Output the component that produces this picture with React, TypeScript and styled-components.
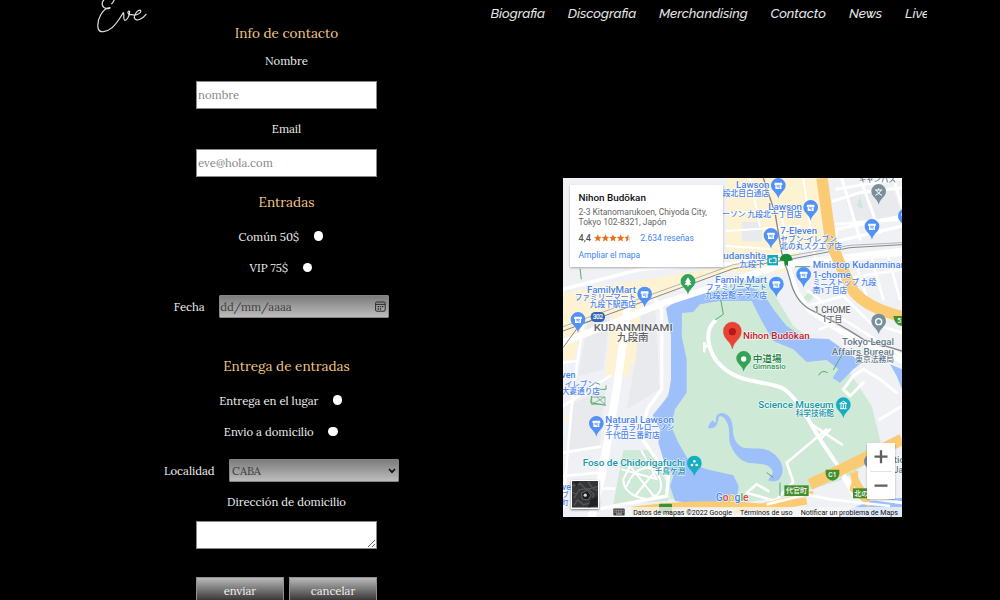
import React from "react";
import styled, { createGlobalStyle } from "styled-components";

const Global = createGlobalStyle`
  * { box-sizing: border-box; }
  body { margin: 0; background: #000; overflow: hidden; }
`;

const serif = `Lora, "Liberation Serif", serif`;

const Page = styled.div`
  width: 1000px;
  height: 600px;
  overflow: hidden;
  background: #000;
  color: #f1f1f1;
  font-family: ${serif};
`;

const Header = styled.header`
  display: flex;
  justify-content: space-between;
  align-items: flex-start;
  height: 22px;
  padding: 0 73px 0 96px;
`;

const Logo = styled.svg`
  width: 51.7px;
  height: 33px;
  fill: none;
  stroke: #dedede;
  stroke-width: 3.6;
  stroke-linecap: round;
  stroke-linejoin: round;
`;

const Nav = styled.nav`
  display: flex;
  gap: 22px;
  width: 436.5px;
  height: 27px;
  overflow: hidden;
`;

const NavLink = styled.a<{ $w: number }>`
  flex: 0 0 ${(p) => p.$w}px;
  min-width: 0;
  white-space: nowrap;
  font: italic 500 13.3px/27px Raleway, Lato, sans-serif;
  color: #e6e6e6;
`;

const Main = styled.main`
  display: flex;
  gap: 126.5px;
  padding-left: 136.5px;
`;

const Form = styled.form`
  display: flex;
  flex-direction: column;
  align-items: center;
  width: 300px;
`;

const Heading = styled.h2<{ $mt?: number }>`
  margin: ${(p) => p.$mt ?? 0}px 0 0;
  font: 400 13.55px/22px ${serif};
  color: #f3c887;
  white-space: nowrap;
`;

const Label = styled.label<{ $mt?: number }>`
  margin-top: ${(p) => p.$mt ?? 0}px;
  font: 400 11.33px/20px ${serif};
  white-space: nowrap;
`;

const Row = styled.div<{ $mt: number; $h?: number; $right: number }>`
  display: flex;
  align-items: center;
  gap: 14.5px;
  height: ${(p) => p.$h ?? 20}px;
  margin-top: ${(p) => p.$mt}px;
  padding-right: ${(p) => p.$right}px;
`;

const Radio = styled.input`
  appearance: none;
  width: 9.4px;
  height: 9.4px;
  margin: 0 0 1px;
  border-radius: 50%;
  background: #fff;
`;

const Field = styled.input<{ $mt: number }>`
  width: 181px;
  height: 28px;
  margin-top: ${(p) => p.$mt}px;
  padding: 0 1px;
  border: 1px solid #8a8a8a;
  background: #fff;
  font: 400 11.33px ${serif};
  &::placeholder { color: #858585; }
`;

const Area = styled.textarea`
  width: 181px;
  height: 28px;
  margin: 9.5px 0 0;
  border: 1px solid #8a8a8a;
  background: #fff;
  resize: both;
`;

const Picker = styled.div<{ $pad: number }>`
  display: flex;
  align-items: center;
  justify-content: space-between;
  width: 170px;
  height: 23px;
  padding: 0 2px 0 ${(p) => p.$pad}px;
  border: 1px solid #858585;
  border-radius: 1px;
  background: linear-gradient(#7c7c7c, #bdbdbd);
  color: #3c3c3c;
  font: 400 11.33px ${serif};
`;

const Buttons = styled.div`
  display: flex;
  gap: 5px;
  margin-top: 28px;
`;

const Button = styled.button`
  width: 88px;
  height: 28px;
  padding: 0;
  border: 1px solid #909090;
  background: linear-gradient(#b9b9b9, #222);
  color: #f1f1f1;
  font: 400 11.33px ${serif};
`;

const MapFrame = styled.section`
  position: relative;
  width: 339px;
  height: 339px;
  margin-top: 156px;
  overflow: hidden;
  font-family: Roboto, "Noto Sans CJK JP", sans-serif;
`;

const MapCanvas = styled.svg`
  display: block;
  width: 339px;
  height: 339px;
  text {
    font-family: Roboto, "Noto Sans CJK JP", sans-serif;
    font-weight: 500;
    paint-order: stroke;
    stroke: rgba(255, 255, 255, 0.75);
    stroke-width: 4px;
    stroke-linejoin: round;
  }
`;

const ShieldText = styled.g`
  fill: #fff;
  text {
    stroke: none;
  }
`;

const Card = styled.div`
  position: absolute;
  left: 7px;
  top: 7px;
  width: 153px;
  height: 82px;
  padding: 6px 0 0 8.5px;
  background: #fff;
  box-shadow: 0 1px 2px rgba(0, 0, 0, 0.3);
  white-space: nowrap;
`;

const PlaceName = styled.div`
  font-size: 9.9px;
  line-height: 13px;
  font-weight: 500;
  color: #111;
`;

const Address = styled.div`
  margin-top: 4px;
  font-size: 8.5px;
  line-height: 9.8px;
  color: #666;
`;

const Rating = styled.div`
  display: flex;
  align-items: center;
  height: 12px;
  margin-top: 4px;
  font-size: 9.2px;
  font-weight: 500;
  color: #555;
`;

const Stars = styled.svg`
  width: 38px;
  height: 8px;
  margin: 0 8.5px 0 3px;
`;

const MapLink = styled.a`
  font-size: 8.5px;
  font-weight: 400;
  color: #4285f4;
`;

const MoreLink = styled(MapLink)`
  display: block;
  margin-top: 6.5px;
  line-height: 11px;
`;

const Zoom = styled.div`
  position: absolute;
  left: 303.5px;
  top: 265px;
  width: 28px;
  height: 56px;
  background: #fff;
  box-shadow: 0 1px 2px rgba(0, 0, 0, 0.3);
`;

const Satellite = styled.svg`
  position: absolute;
  left: 7.5px;
  top: 302px;
  width: 28.5px;
  height: 28.5px;
  border: 1px solid #fff;
  box-shadow: 0 1px 2px rgba(0, 0, 0, 0.5);
`;

const Legal = styled.div`
  position: absolute;
  left: 49px;
  right: 0;
  bottom: 0;
  display: flex;
  align-items: center;
  justify-content: space-between;
  height: 10px;
  padding: 0 4px 0 1px;
  background: rgba(245, 245, 245, 0.75);
  font-size: 7.1px;
  color: #111;
  white-space: nowrap;
`;

const links: [string, number][] = [
  ["Biografia", 55.2],
  ["Discografia", 69.3],
  ["Merchandising", 89.5],
  ["Contacto", 56.5],
  ["News", 34],
  ["Live", 30],
];

const BLUE = "#4a83ea";
const TEAL = "#1396a8";
const SLATE = "#64798a";

type T = [string, number, number, number, number, string, ("start" | "end")?];

// text, x, baseline, size, drawn length, colour, anchor
const labels: T[] = [
  ["Lawson", 628, 36, 29, 100, BLUE, "end"],
  ["段北目白通店", 628, 59, 24, 140, BLUE, "end"],
  ["Lawson", 726, 101, 29, 101, BLUE, "end"],
  ["ーソン 九段北一丁目店", 725, 124, 23, 238, BLUE, "end"],
  ["7-Eleven", 661, 175, 28, 110, BLUE],
  ["セブン-イレブン", 661, 197, 23, 170, BLUE],
  ["北の丸スクエア店", 661, 219, 24, 185, BLUE],
  ["udanshita", 618, 249, 29, 128, BLUE, "end"],
  ["九段下", 614, 273, 25, 76, BLUE, "end"],
  ["Ministop Kudanminami", 758, 276, 28, 296, BLUE],
  ["1-chome", 758, 305, 28, 114, BLUE],
  ["ミニストップ 九段", 758, 328, 23, 191, BLUE],
  ["南1丁目店", 758, 351, 23, 103, BLUE],
  ["Family Mart", 621, 321, 29, 155, BLUE, "end"],
  ["ファミリーマート", 621, 343, 23, 183, BLUE, "end"],
  ["九段会館テラス店", 621, 365, 23, 186, BLUE, "end"],
  ["FamilyMart", 228, 350, 29, 147, BLUE, "end"],
  ["ファミリーマート", 228, 371, 23, 184, BLUE, "end"],
  ["九段下駅西店", 228, 394, 23, 139, BLUE, "end"],
  ["KUDANMINAMI", 101, 465, 28, 237, "#5f6368"],
  ["九段南", 171, 494, 31, 95, "#5f6368"],
  ["1 CHOME", 763, 412, 25, 108, "#5f6368"],
  ["1丁目", 787, 437, 25, 60, "#5f6368"],
  ["Tokyo Legal", 1002, 506, 28, 156, SLATE, "end"],
  ["Affairs Bureau", 1002, 536, 28, 187, SLATE, "end"],
  ["東京法務局", 1002, 559, 23, 116, SLATE, "end"],
  ["Nihon Budōkan", 549, 488, 29, 200, "#c5221f"],
  ["中道場", 578, 557, 29, 87, "#188038"],
  ["Gimnasio", 578, 580, 22, 99, "#2a9550"],
  ["Science Museum", 821, 695, 28, 226, TEAL, "end"],
  ["科学技術館", 822, 720, 23, 115, TEAL, "end"],
  ["ven", 4, 607, 28, 42, BLUE],
  ["イレブン", 14, 632, 23, 91, BLUE],
  ["大妻通り店", 5, 655, 23, 115, BLUE],
  ["Natural Lawson", 136, 740, 29, 206, BLUE],
  ["ナチュラルローソン", 136, 763, 23, 207, BLUE],
  ["千代田三番町店", 136, 786, 23, 163, BLUE],
  ["Foso de Chidorigafuchi", 375, 869, 29, 307, TEAL, "end"],
  ["千鳥ケ淵", 375, 893, 23, 91, TEAL, "end"],
  ["ve", 6, 941, 26, 26, BLUE],
  ["ブ", 6, 963, 22, 20, BLUE],
  ["町", 4, 986, 22, 22, BLUE],
  ["キャンパス", 896, 19, 23, 112, SLATE],
  ["tio", 1001, 862, 28, 34, SLATE],
  ["Ja", 1001, 891, 28, 28, SLATE],
];

const shops = [
  [655, 30], [752, 96], [633, 180], [936, 153], [731, 297], [649, 326], [254, 356], [54, 432], [109, 744], [1036, 122],
];

const PinShape = ({ x, y, color, children }: { x: number; y: number; color: string; children?: React.ReactNode }) => (
  <g transform={`translate(${x} ${y})`}>
    <path d="M0-24A22 22 0 0 0-22-2C-22 15-5 18 0 38C5 18 22 15 22-2A22 22 0 0 0 0-24Z" fill={color} />
    {children}
  </g>
);

const City = () => (
  <MapCanvas viewBox="9 6 1017 1017">
    <rect width="1040" height="1040" fill="#eff1f4" />
    <g fill="#fdf3d3">
      <path d="M500 6H770L790 200L700 240L680 290L560 290L500 290Z" />
      <path d="M9 350L490 272L560 262L380 330L9 470Z" />
      <path d="M160 400L210 390V600L160 606L135 590Z" />
      <path d="M215 390L245 380L225 570L210 560Z" />
      <path d="M9 460L70 440L40 560L9 560Z" />
      <path d="M9 715L55 725L40 735L9 730Z" />
    </g>
    <g fill="#e8eaee">
      <path d="M545 138H605V196H545Z" />
      <path d="M850 55L1000 40L1026 120L880 135Z" />
      <path d="M85 430L150 420L130 580L55 600Z" />
      <path d="M245 400L285 390L300 640L200 700L225 560Z" />
      <path d="M40 680L135 640L120 810L20 830Z" />
    </g>

    {/* palace grounds */}
    <path d="M350 365L470 320L610 300L700 450L850 560L935 690L970 830L850 910L690 960L520 985L330 970L300 700L340 620Z" fill="#cfe9d7" />
    <path d="M190 823L270 822L330 940L325 975L160 985Z" fill="#cfe9d7" />
    <path d="M730 365L760 335L785 340L745 378Z" fill="#cfe9d7" />
    <path d="M910 100L890 90L900 60Z" fill="#cfe9d7" />

    {/* moats */}
    <g fill="#9dc0fa">
      <path d="M318 397L345 378L430 352L575 335L610 352L640 400L680 450L735 486L806 489L850 520L905 560L880 580L840 620L818 606L835 580L800 552L740 558L700 520L640 495L605 435L575 375L480 375L420 385L400 408L366 411L365 480L380 550V650L345 700L333 750L355 800L390 860L440 880L520 898L536 930L530 975L420 985L345 975L330 930L340 900L310 850L295 800L300 760L278 718L325 660L333 610V480Z" />
      <path d="M444 755C450 735 461 728 463 740L468 738C466 722 470 715 484 711C505 712 516 728 518 752C518 785 528 808 552 815C580 820 605 812 630 826C655 840 672 865 667 890C662 912 650 920 626 914C624 905 640 898 638 885C625 860 600 866 575 862C545 860 525 838 512 808C503 785 512 765 503 745C497 728 488 718 477 722L473 738C472 750 458 762 444 755Z" />
      <path d="M990 565L1026 580V640L1010 600Z" />
      <path d="M870 1000L930 975L1026 965V1023H840Z" />
    </g>

    {/* streets */}
    <g fill="none" stroke="#fff" strokeWidth="10" strokeLinejoin="round" strokeLinecap="round">
      <path strokeWidth="24" d="M205 380L170 640L125 900L95 1023" />
      <path d="M9 340L240 280L520 262L640 240L1026 150" />
      <path d="M9 500L300 385L660 268L1026 225" strokeWidth="20" />
      <path d="M285 370L305 400V640L262 700L240 780L325 900L320 960L110 1000" />
      <path d="M70 440L40 640L20 860L9 1000M9 690L150 600M9 560L50 555M9 830L120 812M125 938H162M9 900L120 890" strokeWidth="8" />
      <path d="M490 60L640 45M500 115L640 100M500 210L630 220M570 6L600 150M660 100L690 240M730 6L765 250M500 165L720 150" strokeWidth="6" />
      <path d="M830 40L1026 6M820 75L900 50L1026 35M830 145L1026 130M845 6L900 190M900 6L960 170M1000 6L1026 90M825 220L830 160L1026 120" strokeWidth="9" />
      <path d="M830 255L1026 235M840 310L1026 280M880 240L920 360M930 230L970 370M980 225L1020 370M740 390L850 360L930 440L1026 470M780 460L850 430L1026 540M745 345L790 380" strokeWidth="8" />
      <path d="M680 260L710 350L745 400L840 465L1026 555" strokeWidth="16" />
      <path d="M465 435C435 460 440 515 470 555C530 630 620 610 670 638C705 660 740 720 780 790L905 975" strokeWidth="12" />
      <path d="M448 508L433 514M433 502V526M800 760L680 860L700 918L645 975L560 950L590 925L625 945M755 745L845 805M780 790L810 760" strokeWidth="8" />
      <path d="M880 600L910 580L960 610L1010 650M880 600L850 640L870 660L910 620M1026 690L960 730M850 905L880 960L1026 980" strokeWidth="9" />
      <path d="M200 930Q230 860 285 880Q330 950 265 970Q190 960 190 910L210 870L285 965M245 825L290 910L185 880M225 960L290 880" strokeWidth="6" />
    </g>

    {/* small park trails */}
    <path d="M482 370L490 415L465 432M820 582L855 520M776 598Q785 580 803 590M92 680L138 688M95 660L92 680M105 640H138V628M120 625L105 620M640 905L620 890M660 960V920M705 272H750M60 278L64 310" fill="none" stroke="#55ad6c" strokeWidth="3" />
    <path d="M95 663H135V685H95ZM95 685L135 663M110 663L135 685" fill="none" stroke="#55ad6c" strokeWidth="2" />

    {/* railways */}
    <g fill="none" stroke="#85888c" strokeWidth="3">
      <path d="M9 465L110 428L350 340L520 278L700 248L870 215L1026 206" />
      <path d="M9 452L110 415L350 328L520 266L700 238L870 208L1026 200" stroke="#b1b4b8" />
      <path d="M610 6L645 110L665 230L690 310Q705 375 750 400Q850 450 910 490L1026 525" strokeWidth="4" />
      <path d="M9 515L60 445L120 425" />
    </g>

    {/* expressways */}
    <g fill="none" stroke="#facb72">
      <path strokeWidth="34" d="M786 6L812 195L838 260L880 345Q920 395 1026 422" />
      <path strokeWidth="34" d="M750 925L850 878L1026 790" />
      <path strokeWidth="22" d="M215 1003Q440 975 620 995L740 975M880 890Q885 930 930 970" />
      <path strokeWidth="12" d="M520 1010L760 950M890 885L875 940L930 990" />
    </g>
    <path d="M620 985L740 955L810 970L990 990" fill="none" stroke="#fff" strokeWidth="8" />

    {/* road shields */}
    <rect x="92" y="408" width="43" height="30" rx="14" fill="#3367b5" />
    <g fill="#458e30">
      <path d="M797 881H838V895Q834 912 817 914Q800 911 797 895ZM1000 420H1030V450Q1004 452 1000 420Z" />
      <rect x="673" y="928" width="73" height="32" />
      <rect x="879" y="937" width="50" height="30" />
      <rect x="297" y="983" width="39" height="30" rx="4" />
    </g>
    <ShieldText fontSize="20">
      <text x="98" y="430" textLength="31">302</text>
      <text x="805" y="903">C1</text>
      <text x="1012" y="441">5</text>
      <text x="678" y="952" fontSize="21" textLength="63">代官町</text>
      <text x="883" y="960" fontSize="21">北の</text>
    </ShieldText>

    {/* stations */}
    <rect x="622" y="237" width="32" height="31" fill="#1aa5bd" />
    <path d="M628 247V260H636M638 246H648V260H638M633 246V252" stroke="#fff" strokeWidth="3" fill="none" />
    <path d="M659 253Q662 233 679 233Q695 233 698 253L684 256V271L679 266L674 271V256Z" fill="#188a38" />

    {labels.map(([t, x, y, s, len, color, anchor]) => (
      <text key={t + x + y} x={x} y={y} fontSize={s} textLength={len} lengthAdjust="spacingAndGlyphs" fill={color} textAnchor={anchor ?? "start"}>
        {t}
      </text>
    ))}

    {shops.map(([x, y]) => (
      <PinShape key={`${x}-${y}`} x={x} y={y} color="#5292f7">
        <path d="M-11-10H11L12-3H9V9H-9V-3H-12Z" fill="#fff" />
        <path d="M-6-2H6M-5 2H3V7" fill="none" stroke="#5292f7" strokeWidth="2.4" />
      </PinShape>
    ))}
    <PinShape x={384} y={318} color="#34a257">
      <path d="M0-14L9 0H5L11 8H2V13H-2V8H-11L-5 0H-9Z" fill="#fff" />
    </PinShape>
    <PinShape x={551} y={549} color="#34a257"><circle r="8" fill="#fff" /></PinShape>
    <PinShape x={956} y={48} color="#78909c">
      <path d="M0-11V-6M-11-6H11M-7-6Q-3 6 10 10M7-6Q3 6-10 10" fill="none" stroke="#fff" strokeWidth="3" />
    </PinShape>
    <PinShape x={956} y={437} color="#78909c"><circle r="9" fill="none" stroke="#fff" strokeWidth="4" /></PinShape>
    <PinShape x={934} y={858} color="#78909c" />
    <PinShape x={850} y={688} color="#16adc2">
      <path d="M-11-5L0-12L11-5ZM-10 10H10M-7-3V8M0-3V8M7-3V8" fill="none" stroke="#fff" strokeWidth="3" />
    </PinShape>
    <PinShape x={403} y={863} color="#16adc2">
      <g fill="#fff"><circle cy="-7" r="4" /><circle cx="-7" cy="4" r="4" /><circle cx="7" cy="4" r="4" /></g>
    </PinShape>
    <path d="M517 438A27 27 0 0 0 490 466C490 491 512 494 517 519C522 494 544 491 544 466A27 27 0 0 0 517 438Z" fill="#ea4335" stroke="#c5372c" strokeWidth="1" />
    <circle cx="517" cy="467" r="11" fill="#b11b17" />

    <text x="467" y="976" fontSize="31" textLength="99" lengthAdjust="spacingAndGlyphs">
      <tspan fill="#4285f4">G</tspan><tspan fill="#ea4335">o</tspan><tspan fill="#f5b400">o</tspan><tspan fill="#4285f4">g</tspan><tspan fill="#34a853">l</tspan><tspan fill="#ea4335">e</tspan>
    </text>
  </MapCanvas>
);

const starPath = "M4 0L5.1 2.8L8 3L5.8 4.9L6.5 7.8L4 6.2L1.5 7.8L2.2 4.9L0 3L2.9 2.8Z";

export default function App() {
  return (
    <Page>
      <Global />
      <Header>
        <Logo viewBox="50 0 155 99">
          <path d="M105-2Q103 6 97 11M76-3C64 8 67 22 80 25C88 27 94 24 92 23C70 24 52 58 56 84C60 101 82 97 98 83C116 68 124 49 132 38C136 39 130 58 136 61C143 62 151 45 151 36C149 29 143 36 148 42C152 46 162 42 164 46C175 45 186 38 184 32C179 26 163 42 165 54C171 68 192 54 200 43" />
        </Logo>
        <Nav>
          {links.map(([t, w]) => (
            <NavLink key={t} $w={w}>{t}</NavLink>
          ))}
        </Nav>
      </Header>
      <Main>
        <Form>
          <Heading>Info de contacto</Heading>
          <Label $mt={7}>Nombre</Label>
          <Field $mt={10} placeholder="nombre" />
          <Label $mt={10}>Email</Label>
          <Field $mt={9.5} placeholder="eve@hola.com" />
          <Heading $mt={14.5}>Entradas</Heading>
          <Row $mt={13.5} $right={11.5}>
            <Label>Común 50$</Label>
            <Radio type="radio" name="entrada" />
          </Row>
          <Row $mt={11.5} $right={11.5}>
            <Label>VIP 75$</Label>
            <Radio type="radio" name="entrada" />
          </Row>
          <Row $mt={17} $h={23} $right={10}>
            <Label>Fecha</Label>
            <Picker $pad={0}>
              <span>dd/mm/aaaa</span>
              <svg width="11" height="11" viewBox="0 0 11 11" fill="none" stroke="#2b2b2b">
                <rect x=".6" y="1" width="9.6" height="9.2" rx="1.2" />
                <path d="M.6 3.4H10.2" />
                <path d="M2.6 5.7H4M4.8 5.7H6.2M7 5.7H8.4M2.6 8H4M4.8 8H6.2" strokeWidth="1.3" />
              </svg>
            </Picker>
          </Row>
          <Heading $mt={36.5}>Entrega de entradas</Heading>
          <Row $mt={14} $right={11.5}>
            <Label>Entrega en el lugar</Label>
            <Radio type="radio" name="entrega" />
          </Row>
          <Row $mt={11.5} $right={11.5}>
            <Label>Envio a domicilio</Label>
            <Radio type="radio" name="entrega" />
          </Row>
          <Row $mt={17} $h={23} $right={10}>
            <Label>Localidad</Label>
            <Picker $pad={2}>
              <span>CABA</span>
              <svg width="8" height="6" viewBox="0 0 8 6" fill="none" stroke="#111" strokeWidth="1.7">
                <path d="M1 1L4 4.2L7 1" />
              </svg>
            </Picker>
          </Row>
          <Label $mt={9.5}>Dirección de domicilio</Label>
          <Area />
          <Buttons>
            <Button type="button">enviar</Button>
            <Button type="button">cancelar</Button>
          </Buttons>
        </Form>
        <MapFrame>
          <City />
          <Card>
            <PlaceName>Nihon Budōkan</PlaceName>
            <Address>2-3 Kitanomarukoen, Chiyoda City,<br />Tokyo 102-8321, Japón</Address>
            <Rating>
              4,4
              <Stars viewBox="0 0 40 8">
                {[0, 8, 16, 24].map((x) => (
                  <path key={x} d={starPath} transform={`translate(${x} 0)`} fill="#e7711b" />
                ))}
                <path d={starPath} transform="translate(32 0)" fill="#ddd" />
                <path d="M36 0V6.2L33.5 7.8L34.2 4.9L32 3L34.9 2.8Z" fill="#e7711b" />
              </Stars>
              <MapLink>2.634 reseñas</MapLink>
            </Rating>
            <MoreLink>Ampliar el mapa</MoreLink>
          </Card>
          <Zoom>
            <svg width="28" height="56" viewBox="0 0 28 56" stroke="#5f5f5f" strokeWidth="2.3">
              <path d="M7.5 13.7H20.5M14 7.2V20.2M7.5 42.7H20.5" />
              <path d="M3 28.5H25" stroke="#e3e3e3" strokeWidth="1" />
            </svg>
          </Zoom>
          <Satellite viewBox="0 0 28 28">
            <rect width="28" height="28" fill="#353638" />
            <path d="M0 5L9 3L15 9L27 6M2 18L8 9L16 8L23 14L21 23L12 25L6 20L2 26M17 1L22 8L27 10M0 12L5 14" stroke="#56575a" strokeWidth="1.4" fill="none" />
            <path d="M10 13L16 10L20 15L17 20L11 19Z" fill="#1a1b1d" stroke="#77797b" strokeWidth=".8" />
            <circle cx="14" cy="15" r="1.7" fill="#d7dadb" />
            <path d="M20 19L27 16V26L17 28ZM2 1L8 0L5 6Z" fill="#222325" />
          </Satellite>
          <Legal>
            <svg width="12" height="8" viewBox="0 0 12 8">
              <rect x=".3" y=".5" width="11.4" height="7" rx=".8" fill="#444" />
              <path d="M1.5 2.3H10.5M1.5 4.1H10.5" stroke="#ddd" strokeWidth=".9" strokeDasharray="1 .7" />
              <path d="M3 6H9" stroke="#ddd" strokeWidth=".9" />
            </svg>
            <span>Datos de mapas ©2022 Google</span>
            <span>Términos de uso</span>
            <span>Notificar un problema de Maps</span>
          </Legal>
        </MapFrame>
      </Main>
    </Page>
  );
}
